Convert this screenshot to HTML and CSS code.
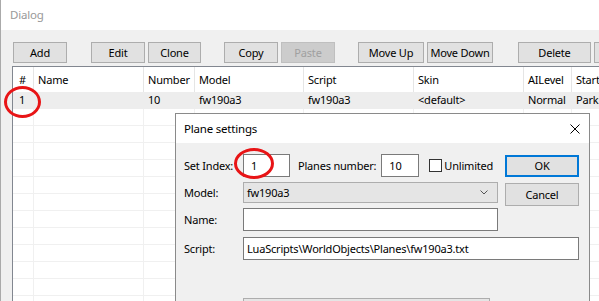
FILE: index.html
```html
<!DOCTYPE html>
<html lang="en">
<head>
    <meta charset="UTF-8" />
    <title>Dialog</title>
    <link rel="stylesheet" href="styles.css">
</head>
<body>

<div class="window">
    <div class="titlebar">Dialog</div>

    <div class="toolbar">
        <button class="btn w54">Add</button>
        <button class="btn w54 gap-wide">Edit</button>
        <button class="btn w53">Clone</button>
        <button class="btn w54 gap-big">Copy</button>
        <button class="btn w54" disabled>Paste</button>
        <button class="btn w66 gap-big">Move Up</button>
        <button class="btn w66">Move Down</button>
        <button class="btn w73 gap-wider">Delete</button>
        <button class="btn w73"></button>
    </div>

    <div class="list">
        <div class="list-row list-head">
            <div class="cell first">#</div>
            <div class="cell">Name</div>
            <div class="cell">Number</div>
            <div class="cell">Model</div>
            <div class="cell">Script</div>
            <div class="cell">Skin</div>
            <div class="cell">AILevel</div>
            <div class="cell">Start</div>
        </div>
        <div class="list-row item selected">
            <div class="cell first">1</div>
            <div class="cell"></div>
            <div class="cell">10</div>
            <div class="cell">fw190a3</div>
            <div class="cell">fw190a3</div>
            <div class="cell">&lt;default&gt;</div>
            <div class="cell">Normal</div>
            <div class="cell">Parki</div>
        </div>
        <div class="list-row item"><div class="cell"></div><div class="cell"></div><div class="cell"></div><div class="cell"></div><div class="cell"></div><div class="cell"></div><div class="cell"></div><div class="cell"></div></div>
        <div class="list-row item"><div class="cell"></div><div class="cell"></div><div class="cell"></div><div class="cell"></div><div class="cell"></div><div class="cell"></div><div class="cell"></div><div class="cell"></div></div>
        <div class="list-row item"><div class="cell"></div><div class="cell"></div><div class="cell"></div><div class="cell"></div><div class="cell"></div><div class="cell"></div><div class="cell"></div><div class="cell"></div></div>
        <div class="list-row item"><div class="cell"></div><div class="cell"></div><div class="cell"></div><div class="cell"></div><div class="cell"></div><div class="cell"></div><div class="cell"></div><div class="cell"></div></div>
        <div class="list-row item"><div class="cell"></div><div class="cell"></div><div class="cell"></div><div class="cell"></div><div class="cell"></div><div class="cell"></div><div class="cell"></div><div class="cell"></div></div>
        <div class="list-row item"><div class="cell"></div><div class="cell"></div><div class="cell"></div><div class="cell"></div><div class="cell"></div><div class="cell"></div><div class="cell"></div><div class="cell"></div></div>
        <div class="list-row item"><div class="cell"></div><div class="cell"></div><div class="cell"></div><div class="cell"></div><div class="cell"></div><div class="cell"></div><div class="cell"></div><div class="cell"></div></div>
        <div class="list-row item"><div class="cell"></div><div class="cell"></div><div class="cell"></div><div class="cell"></div><div class="cell"></div><div class="cell"></div><div class="cell"></div><div class="cell"></div></div>
        <div class="list-row item"><div class="cell"></div><div class="cell"></div><div class="cell"></div><div class="cell"></div><div class="cell"></div><div class="cell"></div><div class="cell"></div><div class="cell"></div></div>
        <div class="list-row item"><div class="cell"></div><div class="cell"></div><div class="cell"></div><div class="cell"></div><div class="cell"></div><div class="cell"></div><div class="cell"></div><div class="cell"></div></div>
        <div class="list-row item"><div class="cell"></div><div class="cell"></div><div class="cell"></div><div class="cell"></div><div class="cell"></div><div class="cell"></div><div class="cell"></div><div class="cell"></div></div>
        <div class="list-row item"><div class="cell"></div><div class="cell"></div><div class="cell"></div><div class="cell"></div><div class="cell"></div><div class="cell"></div><div class="cell"></div><div class="cell"></div></div>
    </div>
</div>

<!-- red highlight on the list row -->
<div class="marker marker-row"></div>

<div class="dialog">
    <div class="dialog-title">
        <span>Plane settings</span>
        <svg class="close" width="10" height="10" viewBox="0 0 10 10">
            <path d="M0.5 0.5 L9.5 9.5 M9.5 0.5 L0.5 9.5" stroke="#000" stroke-width="1" fill="none" />
        </svg>
    </div>

    <div class="dialog-body">
        <div class="form-row">
            <span class="label">Set Index:</span>
            <input class="edit num idx" type="text" value="1">
            <span class="label planes">Planes number:</span>
            <input class="edit num planes-box" type="text" value="10">
            <span class="check"></span>
            <span class="check-label">Unlimited</span>
            <button class="btn dlg-btn default">OK</button>
        </div>

        <div class="form-row top">
            <span class="label tall">Model:</span>
            <div class="combo">
                <span>fw190a3</span>
                <svg width="8" height="5" viewBox="0 0 8 5">
                    <path d="M0.5 0.5 L4 4 L7.5 0.5" stroke="#555" stroke-width="1" fill="none" />
                </svg>
            </div>
            <button class="btn dlg-btn cancel">Cancel</button>
        </div>

        <div class="form-row row-name">
            <span class="label">Name:</span>
            <input class="edit wide" type="text" value="">
        </div>

        <div class="form-row row-script">
            <span class="label">Script:</span>
            <input class="edit script" type="text" value="LuaScripts\WorldObjects\Planes\fw190a3.txt">
        </div>

        <div class="bottom-box"></div>
    </div>
</div>

<!-- red highlight on the index field -->
<div class="marker marker-index"></div>

</body>
</html>
```

FILE: styles.css
```css
* {
    box-sizing: border-box;
}
body {
    margin: 0;
    width: 599px;
    height: 301px;
    overflow: hidden;
    position: relative;
    font-family: "Noto Sans", sans-serif;
    font-size: 11px;
    letter-spacing: -0.2px;
    color: #000;
    background-color: #f0f0f0;
}
.window {
    height: 301px;
    overflow: hidden;
    border-left: 1px solid #aaa;
    background-color: #f0f0f0;
}
.titlebar {
    height: 30px;
    line-height: 30px;
    padding-left: 9px;
    background-color: #fff;
    color: #999;
    font-size: 11.5px;
}
.toolbar {
    display: flex;
    height: 36px;
    padding: 12px 0 0 12px;
    gap: 3px;
    overflow: hidden;
}
.btn {
    flex-shrink: 0;
    height: 21px;
    padding: 0;
    border: 1px solid #adadad;
    background-color: #e1e1e1;
    font-family: inherit;
    font-size: inherit;
    letter-spacing: inherit;
    color: #000;
}
.btn:disabled {
    background-color: #cccccc;
    border-color: #bfbfbf;
    color: #a0a0a0;
}
.w53 { width: 53px; }
.w54 { width: 54px; }
.w66 { width: 66px; }
.w73 { width: 73px; }
.gap-big {
    margin-left: 20px;
}
.gap-wide {
    margin-left: 21px;
}
.gap-wider {
    margin-left: 22px;
}
.list {
    margin-left: 11px;
    width: 587px;
    height: 235px;
    overflow: hidden;
    border-left: 1px solid #828790;
    border-top: 1px solid #828790;
    background-color: #fff;
}
.list-row {
    display: grid;
    grid-template-columns: 21px 110px 51px 109px 110px 110px 48px 27px;
}
.cell {
    padding-left: 4px;
    white-space: nowrap;
    overflow: hidden;
    border-right: 1px solid #f0f0f0;
}
.cell:last-child {
    border-right: none;
}
.cell.first {
    padding-left: 6px;
}
.list-head {
    height: 25px;
}
.list-head .cell {
    line-height: 25px;
    border-right-color: #e5e5e5;
}
.item {
    height: 17px;
    border-bottom: 1px solid #f0f0f0;
}
.item .cell {
    line-height: 16px;
}
.item.selected {
    background-color: #ededed;
    border-bottom-color: #ededed;
}
.item.selected .cell {
    border-right-color: #ededed;
}
.marker {
    position: absolute;
    border: 3px solid #e81416;
    border-radius: 50%;
}
.marker-row {
    left: 4px;
    top: 86px;
    width: 37px;
    height: 32px;
}
.marker-index {
    left: 234px;
    top: 148px;
    width: 40px;
    height: 31px;
}
.dialog {
    position: absolute;
    left: 175px;
    top: 113px;
    width: 415px;
    height: 188px;
    overflow: hidden;
    border: 1px solid #8a8a8a;
    border-bottom: none;
    background-color: #f0f0f0;
}
.dialog-title {
    display: flex;
    align-items: center;
    justify-content: space-between;
    height: 29px;
    padding: 0 9px 0 8px;
    background-color: #fff;
    font-size: 11.5px;
}
.dialog-body {
    padding: 11px 10px 0 8px;
}
.form-row {
    display: flex;
    align-items: center;
    height: 23px;
    white-space: nowrap;
}
.form-row.top {
    align-items: flex-start;
    height: 24px;
    margin-top: 5px;
}
.row-name {
    margin-top: 2px;
}
.row-script {
    margin-top: 6px;
}
.label {
    width: 59px;
    flex-shrink: 0;
}
.label.tall {
    line-height: 21px;
}
.label.planes {
    width: auto;
    margin: 0 5px 0 8px;
}
.edit {
    height: 23px;
    padding: 0 3px;
    border: 1px solid #7a7a7a;
    background-color: #fff;
    font-family: inherit;
    font-size: inherit;
    letter-spacing: inherit;
    color: #000;
    outline: none;
}
.edit.num {
    padding-left: 7px;
}
.idx {
    width: 47px;
}
.planes-box {
    width: 38px;
}
.wide {
    width: 255px;
}
.script {
    width: 336px;
}
.check {
    width: 13px;
    height: 13px;
    margin-left: 10px;
    border: 1px solid #333;
    background-color: #fff;
}
.check-label {
    margin-left: 2px;
}
.dlg-btn {
    width: 74px;
    margin-left: auto;
}
.default {
    height: 22px;
    border: 2px solid #0078d7;
}
.cancel {
    height: 23px;
    margin-top: 1px;
}
.combo {
    display: flex;
    align-items: center;
    justify-content: space-between;
    width: 255px;
    height: 21px;
    padding: 0 9px 0 3px;
    border: 1px solid #adadad;
    background-color: #e5e5e5;
}
.bottom-box {
    margin: 38px 0 0 59px;
    width: 247px;
    height: 30px;
    border: 1px solid #adadad;
    background-color: #e5e5e5;
}
```
